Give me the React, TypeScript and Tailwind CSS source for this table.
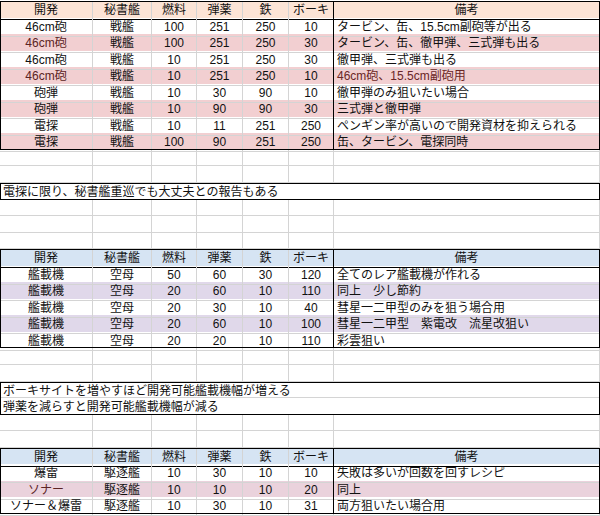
import React from 'react';

type Row = { name: string; ship: string; fuel: string; ammo: string; steel: string; baux: string; note: string; bg: string; tint?: boolean; noteTint?: boolean };

const COLS = 'grid grid-cols-[93px_59px_45px_46px_46px_45px_1fr] h-[16.55px] leading-[18px]';
const GRID = 'border-r border-b border-[#d4d4d4]';
const HEAD = ['開発', '秘書艦', '燃料', '弾薬', '鉄', 'ボーキ', '備考'];

const table1: Row[] = [
  { name: '46cm砲', ship: '戦艦', fuel: '100', ammo: '251', steel: '250', baux: '10', note: 'タービン、缶、15.5cm副砲等が出る', bg: 'bg-white' },
  { name: '46cm砲', ship: '戦艦', fuel: '100', ammo: '251', steel: '250', baux: '30', note: 'タービン、缶、徹甲弾、三式弾も出る', bg: 'bg-[#f2cfd1]', tint: true },
  { name: '46cm砲', ship: '戦艦', fuel: '10', ammo: '251', steel: '250', baux: '30', note: '徹甲弾、三式弾も出る', bg: 'bg-white' },
  { name: '46cm砲', ship: '戦艦', fuel: '10', ammo: '251', steel: '250', baux: '10', note: '46cm砲、15.5cm副砲用', bg: 'bg-[#f2cfd1]', tint: true, noteTint: true },
  { name: '砲弾', ship: '戦艦', fuel: '10', ammo: '30', steel: '90', baux: '10', note: '徹甲弾のみ狙いたい場合', bg: 'bg-white' },
  { name: '砲弾', ship: '戦艦', fuel: '10', ammo: '90', steel: '90', baux: '30', note: '三式弾と徹甲弾', bg: 'bg-[#f2cfd1]' },
  { name: '電探', ship: '戦艦', fuel: '10', ammo: '11', steel: '251', baux: '250', note: 'ペンギン率が高いので開発資材を抑えられる', bg: 'bg-white' },
  { name: '電探', ship: '戦艦', fuel: '100', ammo: '90', steel: '251', baux: '250', note: '缶、タービン、電探同時', bg: 'bg-[#f2cfd1]' },
];

const table2: Row[] = [
  { name: '艦載機', ship: '空母', fuel: '50', ammo: '60', steel: '30', baux: '120', note: '全てのレア艦載機が作れる', bg: 'bg-white' },
  { name: '艦載機', ship: '空母', fuel: '20', ammo: '60', steel: '10', baux: '110', note: '同上　少し節約', bg: 'bg-[#e0d8ea]' },
  { name: '艦載機', ship: '空母', fuel: '20', ammo: '30', steel: '10', baux: '40', note: '彗星一二甲型のみを狙う場合用', bg: 'bg-white' },
  { name: '艦載機', ship: '空母', fuel: '20', ammo: '60', steel: '10', baux: '100', note: '彗星一二甲型　紫電改　流星改狙い', bg: 'bg-[#e0d8ea]' },
  { name: '艦載機', ship: '空母', fuel: '20', ammo: '20', steel: '10', baux: '110', note: '彩雲狙い', bg: 'bg-white' },
];

const table3: Row[] = [
  { name: '爆雷', ship: '駆逐艦', fuel: '10', ammo: '30', steel: '10', baux: '10', note: '失敗は多いが回数を回すレシピ', bg: 'bg-white' },
  { name: 'ソナー', ship: '駆逐艦', fuel: '10', ammo: '10', steel: '10', baux: '20', note: '同上', bg: 'bg-[#ead2dc]', tint: true },
  { name: 'ソナー＆爆雷', ship: '駆逐艦', fuel: '10', ammo: '30', steel: '10', baux: '31', note: '両方狙いたい場合用', bg: 'bg-white' },
];

const Blank = () => (
  <div className={COLS}>
    {HEAD.map((h) => (
      <div key={h} className={GRID} />
    ))}
  </div>
);

const Table: React.FC<{ rows: Row[]; head: string }> = ({ rows, head }) => (
  <div className="outline outline-1 -outline-offset-1 outline-black">
    <div className={`${COLS} ${head}`}>
      {HEAD.map((h, i) => (
        <div key={h} className={`border-b border-b-black text-center ${i === 5 ? 'border-r border-r-black' : 'border-r border-r-[#d4d4d4]'}`}>
          {h}
        </div>
      ))}
    </div>
    {rows.map((r, i) => (
      <div key={i} className={`${COLS} ${r.bg}`}>
        <div className={`${GRID} text-center ${r.tint ? 'text-[#5c2424]' : ''}`}>{r.name}</div>
        <div className={`${GRID} text-center`}>{r.ship}</div>
        <div className={`${GRID} text-center`}>{r.fuel}</div>
        <div className={`${GRID} text-center`}>{r.ammo}</div>
        <div className={`${GRID} text-center`}>{r.steel}</div>
        <div className="border-r border-r-black border-b border-b-[#d4d4d4] text-center">{r.baux}</div>
        <div className={`${GRID} pl-[3px] whitespace-nowrap ${r.noteTint ? 'text-[#6a2626]' : ''}`}>{r.note}</div>
      </div>
    ))}
  </div>
);

const Note: React.FC<{ text: string; last?: boolean }> = ({ text, last }) => (
  <div className={`h-[16.55px] leading-[18px] pl-[3px] whitespace-nowrap ${last ? '' : 'border-b border-[#d4d4d4]'}`}>{text}</div>
);

export default function App() {
  return (
    <div
      className="w-[600px] h-[516px] overflow-hidden bg-white pt-px text-[12px] text-[#111]"
      style={{ fontFamily: '"Liberation Sans", "Noto Sans CJK JP", sans-serif' }}
    >
      <Table rows={table1} head="bg-[#fce4d6]" />
      <Blank />
      <Blank />
      <div className="outline outline-1 -outline-offset-1 outline-black">
        <Note text="電探に限り、秘書艦重巡でも大丈夫との報告もある" last />
      </div>
      <Blank />
      <Blank />
      <Blank />
      <Table rows={table2} head="bg-[#d6e4f3]" />
      <Blank />
      <Blank />
      <div className="outline outline-1 -outline-offset-1 outline-black">
        <Note text="ボーキサイトを増やすほど開発可能艦載機幅が増える" />
        <Note text="弾薬を減らすと開発可能艦載機幅が減る" last />
      </div>
      <Blank />
      <Blank />
      <Table rows={table3} head="bg-[#d6e4f3]" />
      <Blank />
    </div>
  );
}
